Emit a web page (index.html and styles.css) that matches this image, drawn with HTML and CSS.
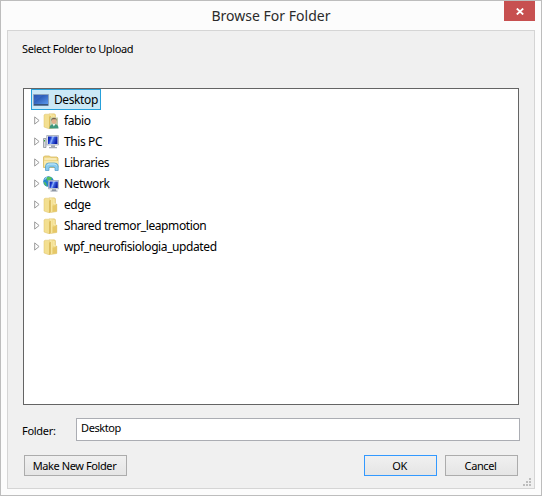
FILE: index.html
```html
<!DOCTYPE html>
<html lang="en">
<head>
<meta charset="utf-8">
<title>Browse For Folder</title>
<link rel="stylesheet" href="styles.css">
</head>
<body>
<svg width="0" height="0" class="defs">
  <defs>
    <linearGradient id="gold" x1="0" x2="1" y1="0" y2="0"><stop offset="0" stop-color="#fdf3bd"/><stop offset=".6" stop-color="#f1da85"/><stop offset="1" stop-color="#dfbf5b"/></linearGradient>
    <linearGradient id="screen" x1="0" x2="1" y1="0" y2="1"><stop offset="0" stop-color="#173f9d"/><stop offset="1" stop-color="#5b98ec"/></linearGradient>
    <linearGradient id="pc" x1="0" x2="1" y1="0" y2=".3"><stop offset="0" stop-color="#0718a0"/><stop offset=".3" stop-color="#1938d0"/><stop offset=".5" stop-color="#8eb4fb"/><stop offset=".65" stop-color="#3a60dd"/><stop offset="1" stop-color="#0a1ca6"/></linearGradient>
    <symbol id="arrow" viewBox="0 0 6 9"><path d="M.7 .9v7.2L5.1 4.500z" fill="#fff" stroke="#9b9b9b"/></symbol>
    <symbol id="folder" viewBox="0 0 16 16">
      <path d="M6 .8h5.500l1 1V7h1.300v7.500L8 15.500H6z" fill="url(#gold)" stroke="#dcc06a" stroke-width=".5"/>
      <path d="M1 2l1-.8h3.500L7.500 3v11.500L6 15.800 1 14z" fill="#f3df90" stroke="#dcc06a" stroke-width=".5"/>
      <path d="M6.300 3.500l1.200-.5v12l-1.200.8z" fill="#d3b04a"/>
      <path d="M9.500 8.500h4v5.500l-4 1z" fill="#e6c868"/>
      <path d="M11 1.800V7h2" fill="none" stroke="#fff6c9" stroke-width=".8"/>
    </symbol>
  </defs>
</svg>
<div class="window">
  <header class="titlebar">
    <h1 class="title"><span>Browse For Folder</span></h1>
    <button class="close" aria-label="Close"><svg width="8" height="7" viewBox="0 0 8 7"><path d="M.8 .5L7.200 6.500M7.200 .5L.8 6.500" stroke="#fff" stroke-width="1.800"/></svg></button>
  </header>
  <main class="content">
    <p class="prompt">Select Folder to Upload</p>
    <ul class="tree">
      <li class="row root"><div class="selected">
        <svg class="icon" viewBox="0 0 16 16"><path d="M.5 2.500h15v11H.5z" fill="#7e94b3" stroke="#8ca3bd"/><path d="M1 3h14v9H1z" fill="url(#screen)"/><path d="M1 3h9L1 10z" fill="#4b7bd2" opacity=".4"/><path d="M1 12h14v1.500H1z" fill="#385579"/></svg>
        <span>Desktop</span></div></li>
      <li class="row"><svg class="arrow"><use href="#arrow"/></svg>
        <svg class="icon" viewBox="0 0 16 16"><use href="#folder"/><path d="M7 4.500h8v10H7z" fill="#c4cda9"/><path d="M6.500 15.500c0-3 1.500-4.500 4.500-4.500s4.500 1.500 4.500 4.500z" fill="#3e977c"/><path d="M9.500 11l1.300 2.500L12.500 11z" fill="#eef6ef"/><circle cx="11" cy="8.200" r="2.500" fill="#e0b08c"/><path d="M8.200 8c-.5-4.500 6-4.500 5.600 0l-1-1.700H9.600z" fill="#75614d"/></svg>
        <span>fabio</span></li>
      <li class="row"><svg class="arrow"><use href="#arrow"/></svg>
        <svg class="icon" viewBox="0 0 16 16"><path d="M.5 4.500H3v9H.5z" fill="#d5d8dc" stroke="#8d939b" stroke-width=".8"/><path d="M1 6h1v1.500H1z" fill="#38a838"/><path d="M3.700 1.500h11.800v9.500H3.700z" fill="#e4e7ed" stroke="#a2a9b4" stroke-width=".8"/><path d="M5 2.500h9.500V10H5z" fill="url(#pc)"/><path d="M8 11.300h4V13h2v1.200H6V13h2z" fill="#a3a9b2"/></svg>
        <span>This PC</span></li>
      <li class="row"><svg class="arrow"><use href="#arrow"/></svg>
        <svg class="icon" viewBox="0 0 16 16"><path d="M.5 2l1-1h5l1 1H14l1 1v9.500H.5z" fill="#efd88a" stroke="#d2b14e" stroke-width=".7"/><path d="M1.500 3.500h12v1h-12z" fill="#fffbe0"/><path d="M1 6h14v5.500H1z" fill="#f8e8a9"/><path d="M2.500 15.500V11Q2.800 8 5.500 8h6q3.300 0 3.700 3v4.500H12V13q-.2-1-1.500-1H7.300q-1.200 0-1.300 1v2.500z" fill="#8acbee" stroke="#4b9ac7" stroke-width=".7"/><path d="M4 10.500q.5-1.500 2.500-1.500H11q2 0 2.500 1.500" fill="none" stroke="#c9ebfa"/></svg>
        <span>Libraries</span></li>
      <li class="row"><svg class="arrow"><use href="#arrow"/></svg>
        <svg class="icon" viewBox="0 0 16 16"><circle cx="5.500" cy="5.500" r="5.300" fill="#2585ce"/><path d="M4 1Q6.500 0 9 2L8 4H5.500L4 5 3.500 2.500zM.5 5.500L3 7l1 3.500Q1 9 .5 5.500z" fill="#57c15c"/><path d="M1.800 3.800Q2.500 2 4 1.500" fill="none" stroke="#b5eaf4"/><path d="M5.500 4.500h10.200v8.300H5.500z" fill="#e4e8ef" stroke="#9ca6b5" stroke-width=".8"/><path d="M6.500 5.500h8.300V12H6.500z" fill="url(#pc)"/><path d="M9 13.200h4v1.300h1.500v1H7.500v-1H9z" fill="#8d96a3"/></svg>
        <span>Network</span></li>
      <li class="row"><svg class="arrow"><use href="#arrow"/></svg><svg class="icon"><use href="#folder"/></svg><span>edge</span></li>
      <li class="row"><svg class="arrow"><use href="#arrow"/></svg><svg class="icon"><use href="#folder"/></svg><span>Shared tremor_leapmotion</span></li>
      <li class="row"><svg class="arrow"><use href="#arrow"/></svg><svg class="icon"><use href="#folder"/></svg><span>wpf_neurofisiologia_updated</span></li>
    </ul>
    <div class="field"><label for="folder-name">Folder:</label><input id="folder-name" value="Desktop"></div>
    <footer class="actions">
      <button class="btn make"><span>Make New Folder</span></button>
      <button class="btn primary"><span>OK</span></button>
      <button class="btn"><span>Cancel</span></button>
    </footer>
    <svg class="grip" width="8" height="8" viewBox="0 0 8 8"><path d="M6 0h2v2H6zM3 3h2v2H3zM6 3h2v2H6zM0 6h2v2H0zM3 6h2v2H3zM6 6h2v2H6z" fill="#bdbdbd"/></svg>
  </main>
</div>
</body>
</html>
```
FILE: styles.css
```css
* { box-sizing: border-box; }
body { margin: 0; overflow: hidden; font: 12px/16px "Noto Sans", "Open Sans", sans-serif; color: #000; }
.defs { position: absolute; }
.window { width: 542px; height: 496px; display: flex; flex-direction: column; padding: 0 6px 6px; border: 1px solid #bdbdbd; background: #fcfcfc; }
.titlebar { height: 29px; flex: none; display: flex; align-items: flex-start; }
.title { flex: 1; margin: 0; padding: 5px 0 0 31px; text-align: center; font-size: 14px; line-height: 20px; font-weight: 400; letter-spacing: .02px; color: #2b2b2b; }
.close { width: 31px; height: 20px; padding: 1px 0 0; border: 0; background: #c75050; display: flex; align-items: center; justify-content: center; }
.content { position: relative; flex: 1; display: flex; flex-direction: column; padding: 0 15px; border: 1px solid #d5d5d5; background: #f0f0f0; }
.prompt { margin: 10px 0 31px -1px; font-size: 11px; letter-spacing: -.37px; }
.tree { width: 496px; height: 317px; margin: 0; padding: 0; list-style: none; border: 1px solid #646464; background: #fff; }
.row { height: 21px; display: flex; align-items: center; padding-left: 10px; white-space: nowrap; letter-spacing: -.4px; }
.root { padding-left: 7px; }
.selected { width: 70px; height: 21px; display: flex; align-items: center; gap: 5px; padding-left: 1px; border: 1px solid #26a0da; background: #cbe8f6; }
.arrow { width: 6px; height: 9px; margin-right: 3px; }
.icon { width: 16px; height: 16px; flex: none; }
.row > span { margin-left: 5px; padding-top: 1px; }
.selected span { padding-top: 1px; }
.field { display: flex; margin-top: 13px; }
.field label { flex: none; width: 53px; padding-top: 5px; margin-left: -1px; margin-right: 1px; font-size: 11px; letter-spacing: -.3px; }
.field input { flex: none; width: 444px; height: 23px; padding: 0 4px 4px; border: 1px solid #abadb3; border-radius: 0; background: #fff; font: 11px "Noto Sans", "Open Sans", sans-serif; letter-spacing: -.4px; color: #000; }
.actions { display: flex; gap: 8px; margin: 14px 0 0 1px; }
.btn { width: 73px; height: 21px; padding: 0 2px 0 0; border: 1px solid #acacac; background: linear-gradient(#f0f0f0, #e5e5e5); font: 11px/18px "Noto Sans", "Open Sans", sans-serif; letter-spacing: -.4px; color: #000; }
.make { width: 103px; margin-right: 229px; }
.primary { border-color: #3399ff; }
.grip { position: absolute; right: 3px; bottom: 2px; }
```
